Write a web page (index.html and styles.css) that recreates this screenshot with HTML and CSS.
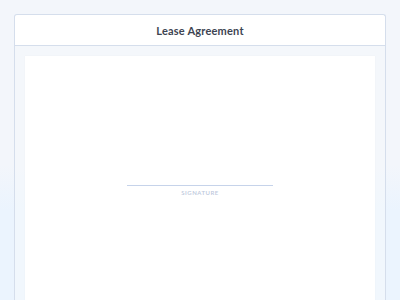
FILE: index.html
```html
<!DOCTYPE html>
<html>
<head>
<meta charset="utf-8">
<link rel="stylesheet" href="styles.css">
</head>
<body>
<div class="card">
  <div class="card-header">Lease Agreement</div>
  <div class="card-body">
    <div class="paper">
      <div class="sig">
        <div class="sig-line"></div>
        <div class="sig-label">SIGNATURE</div>
      </div>
    </div>
  </div>
</div>
</body>
</html>
```
FILE: styles.css
```css
html, body { height: 100%; }
body {
  margin: 0;
  padding: 14px 14px 0 14px;
  box-sizing: border-box;
  overflow: hidden;
  background: linear-gradient(180deg, #f3f6fb 0%, #f3f6fb 55%, #ebf4fe 70%, #ebf4fe 100%);
  font-family: Lato, "Open Sans", "Liberation Sans", sans-serif;
}
.card {
  border: 1px solid #d5deec;
  border-bottom: none;
  border-radius: 3px 3px 0 0;
  height: 100%;
  box-sizing: border-box;
  display: flex;
  flex-direction: column;
  background: rgba(245, 248, 252, 0.6);
}
.card-header {
  height: 30px;
  flex: none;
  background: #fff;
  border-bottom: 1px solid #d5deec;
  border-radius: 3px 3px 0 0;
  display: flex;
  align-items: center;
  justify-content: center;
  font-weight: 700;
  font-size: 11px;
  color: #3d4452;
  letter-spacing: 0.2px;
}
.card-body {
  flex: 1;
  display: flex;
  padding: 10px 10px 0 10px;
}
.paper {
  flex: 1;
  background: #fff;
  box-shadow: 0 0 1px #e6e9ef;
  display: flex;
  justify-content: center;
}
.sig {
  margin-top: 129px;
  width: 146px;
  display: flex;
  flex-direction: column;
  align-items: center;
}
.sig-line {
  width: 100%;
  height: 1px;
  background: #c6d3ea;
}
.sig-label {
  margin-top: 3px;
  font-size: 6px;
  font-weight: 600;
  letter-spacing: 0.5px;
  color: #bdc8dc;
}
```
